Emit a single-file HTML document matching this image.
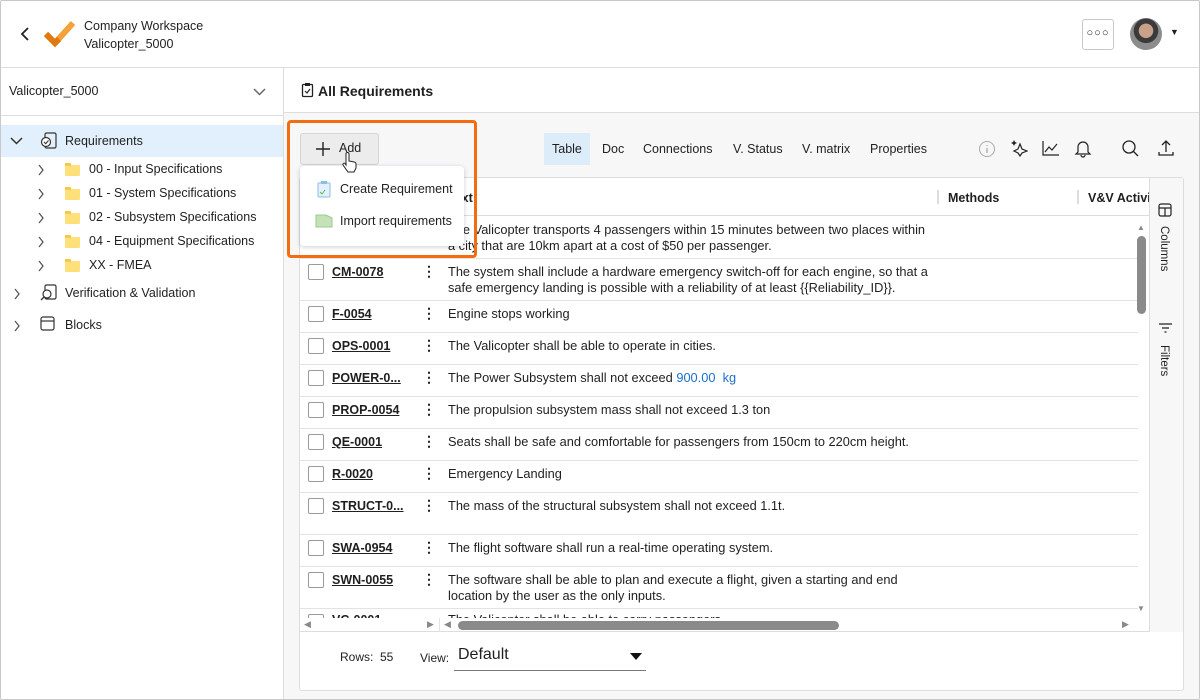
<!DOCTYPE html>
<html><head><meta charset="utf-8"><style>
*{box-sizing:border-box;margin:0;padding:0}
body{width:1200px;height:700px;overflow:hidden;font-family:"Liberation Sans",sans-serif;font-size:13px;color:#1f1f1f;background:#fff;position:relative}
.frame{position:absolute;inset:0;border:1px solid #c8c8c8;border-radius:2px}
.a{position:absolute}
.row{position:absolute;left:300px;width:838px;border-bottom:1px solid #e3e3e3;background:#fff}
.cb{position:absolute;left:8px;top:5px;width:16px;height:16px;border:1px solid #9a9a9a;border-radius:2px;background:#fff}
.id{position:absolute;left:32px;top:5px;font-weight:bold;text-decoration:underline;line-height:16px;font-size:12.5px}
.dots{position:absolute;left:122px;top:4px;font-weight:bold;font-size:14px;line-height:16px}
.tx{position:absolute;left:148px;top:5px;width:484px;line-height:16px;font-size:12.8px}
.vl{position:absolute;top:0;bottom:0;width:1px;background:#e3e3e3}
.tree{position:absolute;font-size:12.5px}
.folder{position:absolute;width:15px;height:11px;background:#fde07a;border-radius:1px}
.folder:before{content:"";position:absolute;left:0;top:-2px;width:6px;height:3px;background:#f7c948}
.tab{position:absolute;top:133px;height:32px;line-height:32px;font-size:12.5px;padding:0 8px}
</style></head><body>
<div class="frame"></div>
<svg class="a" style="left:20px;top:27px" width="10" height="14"><path d="M8 1 L2 7 L8 13" stroke="#222" stroke-width="1.8" fill="none"/></svg>
<svg class="a" style="left:44px;top:20px" width="32" height="28" viewBox="0 0 32 28"><path d="M2 14 L11 23 L29 3" stroke="#f5a13a" stroke-width="6" fill="none"/><path d="M2 14 L11 23 L15 19" stroke="#e07a10" stroke-width="6" fill="none"/></svg>
<div class="a" style="left:84px;top:17px;font-size:12.5px;line-height:18px;color:#222">Company Workspace<br>Valicopter_5000</div>
<div class="a" style="left:1082px;top:19px;width:32px;height:31px;border:1px solid #c8c8c8;border-radius:3px;text-align:center;line-height:26px;font-size:11px;letter-spacing:1px">&#9675;&#9675;&#9675;</div>
<div class="a" style="left:1130px;top:18px;width:32px;height:32px;border-radius:50%;background:radial-gradient(circle at 50% 40%,#c9a08a 0 28%,#3a3a3a 30% 48%,#8c8c8c 50%)"></div>
<div class="a" style="left:1170px;top:27px;font-size:9px">&#9660;</div>
<div class="a" style="left:1px;top:67px;width:1198px;height:1px;background:#ddd"></div>
<div class="a" style="left:283px;top:68px;width:1px;height:631px;background:#ddd"></div>
<div class="a" style="left:9px;top:84px;font-size:12.5px">Valicopter_5000</div>
<svg class="a" style="left:253px;top:88px" width="13" height="8"><path d="M1 1 L6.5 6.5 L12 1" stroke="#666" stroke-width="1.5" fill="none"/></svg>
<div class="a" style="left:1px;top:115px;width:282px;height:1px;background:#ddd"></div>
<div class="a" style="left:1px;top:125px;width:282px;height:32px;background:#e1f0fc"></div>
<svg class="a" style="left:10px;top:137px" width="13" height="8"><path d="M1 1 L6.5 6.5 L12 1" stroke="#333" stroke-width="1.5" fill="none"/></svg>
<svg class="a" style="left:40px;top:132px" width="18" height="18"><rect x="5" y="1" width="11" height="15" rx="1.5" stroke="#333" fill="none" stroke-width="1.2"/><circle cx="6" cy="10" r="4.5" fill="#fff" stroke="#333" stroke-width="1.2"/><path d="M4 10 L5.7 11.7 L8.5 8.5" stroke="#333" fill="none" stroke-width="1.1"/></svg>
<div class="tree" style="left:65px;top:134px">Requirements</div>
<svg class="a" style="left:37px;top:164px" width="8" height="12"><path d="M2 1 L6 6 L2 11" stroke="#555" stroke-width="1.3" fill="none"/></svg><div class="folder" style="left:65px;top:165px"></div><div class="tree" style="left:89px;top:162px">00 - Input Specifications</div>
<svg class="a" style="left:37px;top:188px" width="8" height="12"><path d="M2 1 L6 6 L2 11" stroke="#555" stroke-width="1.3" fill="none"/></svg><div class="folder" style="left:65px;top:189px"></div><div class="tree" style="left:89px;top:186px">01 - System Specifications</div>
<svg class="a" style="left:37px;top:212px" width="8" height="12"><path d="M2 1 L6 6 L2 11" stroke="#555" stroke-width="1.3" fill="none"/></svg><div class="folder" style="left:65px;top:213px"></div><div class="tree" style="left:89px;top:210px">02 - Subsystem Specifications</div>
<svg class="a" style="left:37px;top:236px" width="8" height="12"><path d="M2 1 L6 6 L2 11" stroke="#555" stroke-width="1.3" fill="none"/></svg><div class="folder" style="left:65px;top:237px"></div><div class="tree" style="left:89px;top:234px">04 - Equipment Specifications</div>
<svg class="a" style="left:37px;top:260px" width="8" height="12"><path d="M2 1 L6 6 L2 11" stroke="#555" stroke-width="1.3" fill="none"/></svg><div class="folder" style="left:65px;top:261px"></div><div class="tree" style="left:89px;top:258px">XX - FMEA</div>
<svg class="a" style="left:13px;top:288px" width="8" height="12"><path d="M2 1 L6 6 L2 11" stroke="#555" stroke-width="1.3" fill="none"/></svg>
<svg class="a" style="left:40px;top:284px" width="18" height="18"><rect x="5" y="1" width="11" height="14" rx="1.5" stroke="#333" fill="none" stroke-width="1.2"/><circle cx="7" cy="10" r="4" fill="#fff" stroke="#333" stroke-width="1.2"/><path d="M4 13 L1 16" stroke="#333" stroke-width="1.3"/></svg>
<div class="tree" style="left:65px;top:286px">Verification &amp; Validation</div>
<svg class="a" style="left:13px;top:320px" width="8" height="12"><path d="M2 1 L6 6 L2 11" stroke="#555" stroke-width="1.3" fill="none"/></svg>
<svg class="a" style="left:40px;top:316px" width="16" height="16"><rect x="1" y="1" width="13" height="13" rx="2" stroke="#333" fill="none" stroke-width="1.2"/><path d="M1 5 H14" stroke="#333" stroke-width="1.2"/></svg>
<div class="tree" style="left:65px;top:318px">Blocks</div>
<div class="a" style="left:284px;top:113px;width:915px;height:586px;background:#f7f7f8"></div>
<div class="a" style="left:284px;top:112px;width:915px;height:1px;background:#ddd"></div>
<svg class="a" style="left:301px;top:82px" width="13" height="16"><rect x="1.5" y="2.5" width="10" height="12" rx="1" stroke="#222" fill="none" stroke-width="1.3"/><rect x="4" y="1" width="5" height="3" fill="#222"/><path d="M4 9 L6 11 L9 7" stroke="#222" fill="none" stroke-width="1.2"/></svg>
<div class="a" style="left:318px;top:83px;font-size:14px;font-weight:bold">All Requirements</div>
<div class="a" style="left:300px;top:133px;width:79px;height:32px;background:#ececec;border:1px solid #d5d5d5;border-radius:3px"></div>
<svg class="a" style="left:315px;top:141px" width="16" height="16"><path d="M8 1 V15 M1 8 H15" stroke="#222" stroke-width="1.4"/></svg>
<div class="a" style="left:339px;top:141px;font-size:12.5px">Add</div>
<div class="tab" style="left:544px;background:#dcecf9">Table</div>
<div class="tab" style="left:594px">Doc</div>
<div class="tab" style="left:635px">Connections</div>
<div class="tab" style="left:725px">V. Status</div>
<div class="tab" style="left:794px">V. matrix</div>
<div class="tab" style="left:862px">Properties</div>
<svg class="a" style="left:978px;top:140px" width="18" height="18"><circle cx="9" cy="9" r="7.5" stroke="#aaa" fill="none"/><path d="M9 8 V13 M9 5 V6" stroke="#aaa" stroke-width="1.3"/></svg>
<svg class="a" style="left:1010px;top:139px" width="18" height="18"><path d="M10 5 L12 10 L17 12 L12 14 L10 17 L8 14 L4 12 L8 10 Z" stroke="#222" fill="none" stroke-width="1.2"/><path d="M4 1 L5 3 L7 4 L5 5 L4 7 L3 5 L1 4 L3 3Z" fill="#222"/></svg>
<svg class="a" style="left:1042px;top:140px" width="18" height="17"><path d="M1 1 V15 H17 M3 12 L7 7 L10 10 L15 4" stroke="#222" fill="none" stroke-width="1.2"/></svg>
<svg class="a" style="left:1074px;top:139px" width="18" height="19"><path d="M4 13 V8 a5 5 0 0 1 10 0 V13 L16 15 H2 Z M7 16 a2 2 0 0 0 4 0" stroke="#222" fill="none" stroke-width="1.2"/></svg>
<svg class="a" style="left:1121px;top:139px" width="19" height="19"><circle cx="8" cy="8" r="6" stroke="#222" fill="none" stroke-width="1.3"/><path d="M12.5 12.5 L17 17" stroke="#222" stroke-width="1.3"/></svg>
<svg class="a" style="left:1157px;top:139px" width="18" height="19"><path d="M9 2 V13 M5 6 L9 2 L13 6 M2 13 V16 H16 V13" stroke="#222" fill="none" stroke-width="1.3"/></svg>
<div class="a" style="left:299px;top:177px;width:885px;height:514px;background:#fff;border:1px solid #ddd;border-radius:3px"></div>
<div class="a" style="left:1149px;top:178px;width:34px;height:454px;background:#f7f7f8;border-left:1px solid #ddd"></div>
<svg class="a" style="left:1158px;top:203px" width="14" height="14"><rect x="1" y="1" width="12" height="12" rx="2" stroke="#222" fill="none" stroke-width="1.2"/><path d="M1 5 H13 M7 5 V13" stroke="#222" stroke-width="1.2"/></svg>
<div class="a" style="left:1158px;top:226px;writing-mode:vertical-rl;font-size:11.5px">Columns</div>
<svg class="a" style="left:1159px;top:323px" width="13" height="10"><path d="M0 1 H13 M3 5 H10 M5.5 9 H7.5" stroke="#222" stroke-width="1.2"/></svg>
<div class="a" style="left:1158px;top:345px;writing-mode:vertical-rl;font-size:11.5px">Filters</div>
<div class="a" style="left:300px;top:178px;width:849px;height:38px;border-bottom:1px solid #ddd"></div>
<div class="a" style="left:448px;top:191px;font-weight:bold;font-size:12.5px">Text</div>
<div class="a" style="left:937px;top:190px;width:2px;height:14px;background:#ddd"></div>
<div class="a" style="left:948px;top:191px;font-weight:bold;font-size:12.5px">Methods</div>
<div class="a" style="left:1077px;top:190px;width:2px;height:14px;background:#ddd"></div>
<div class="a" style="left:1088px;top:191px;font-weight:bold;font-size:12.5px;width:61px;overflow:hidden;white-space:nowrap">V&amp;V Activities</div>
<div class="a" style="left:300px;top:217px;width:838px;height:401px;overflow:hidden">
<div class="vl" style="left:139px"></div><div class="vl" style="left:639px"></div><div class="vl" style="left:779px"></div>
</div>
<div class="row" style="top:217px;height:42px"><div class="cb"></div><div class="id">VC-0001</div><div class="dots">&#8942;</div><div class="tx">The Valicopter transports 4 passengers within 15 minutes between two places within a city that are 10km apart at a cost of $50 per passenger.</div></div>
<div class="row" style="top:259px;height:42px"><div class="cb"></div><div class="id">CM-0078</div><div class="dots">&#8942;</div><div class="tx">The system shall include a hardware emergency switch-off for each engine, so that a safe emergency landing is possible with a reliability of at least {{Reliability_ID}}.</div></div>
<div class="row" style="top:301px;height:32px"><div class="cb"></div><div class="id">F-0054</div><div class="dots">&#8942;</div><div class="tx">Engine stops working</div></div>
<div class="row" style="top:333px;height:32px"><div class="cb"></div><div class="id">OPS-0001</div><div class="dots">&#8942;</div><div class="tx">The Valicopter shall be able to operate in cities.</div></div>
<div class="row" style="top:365px;height:32px"><div class="cb"></div><div class="id">POWER-0...</div><div class="dots">&#8942;</div><div class="tx">The Power Subsystem shall not exceed <span style="color:#1a6fd1">900.00&nbsp; kg</span></div></div>
<div class="row" style="top:397px;height:32px"><div class="cb"></div><div class="id">PROP-0054</div><div class="dots">&#8942;</div><div class="tx">The propulsion subsystem mass shall not exceed 1.3 ton</div></div>
<div class="row" style="top:429px;height:32px"><div class="cb"></div><div class="id">QE-0001</div><div class="dots">&#8942;</div><div class="tx">Seats shall be safe and comfortable for passengers from 150cm to 220cm height.</div></div>
<div class="row" style="top:461px;height:32px"><div class="cb"></div><div class="id">R-0020</div><div class="dots">&#8942;</div><div class="tx">Emergency Landing</div></div>
<div class="row" style="top:493px;height:42px"><div class="cb"></div><div class="id">STRUCT-0...</div><div class="dots">&#8942;</div><div class="tx">The mass of the structural subsystem shall not exceed 1.1t.</div></div>
<div class="row" style="top:535px;height:32px"><div class="cb"></div><div class="id">SWA-0954</div><div class="dots">&#8942;</div><div class="tx">The flight software shall run a real-time operating system.</div></div>
<div class="row" style="top:567px;height:42px"><div class="cb"></div><div class="id">SWN-0055</div><div class="dots">&#8942;</div><div class="tx">The software shall be able to plan and execute a flight, given a starting and end<br>location by the user as the only inputs.</div></div>
<div class="a" style="left:300px;top:609px;width:838px;height:9px;overflow:hidden;background:#fff"><div class="cb" style="top:5px"></div><div class="id" style="top:3px">VC-0001</div><div class="tx" style="top:3px">The Valicopter shall be able to carry passengers</div></div>
<div class="a" style="left:1137px;top:223px;font-size:8px;color:#888">&#9650;</div>
<div class="a" style="left:1137px;top:236px;width:9px;height:78px;background:#8a8a8a;border-radius:5px"></div>
<div class="a" style="left:1137px;top:604px;font-size:8px;color:#888">&#9660;</div>
<div class="a" style="left:300px;top:618px;width:849px;height:14px;background:#fff;border-bottom:1px solid #ddd"></div>
<div class="a" style="left:439px;top:618px;width:1px;height:14px;background:#e3e3e3"></div>
<div class="a" style="left:304px;top:619px;font-size:9px;color:#888">&#9664;</div>
<div class="a" style="left:427px;top:619px;font-size:9px;color:#888">&#9654;</div>
<div class="a" style="left:444px;top:619px;font-size:9px;color:#888">&#9664;</div>
<div class="a" style="left:458px;top:621px;width:381px;height:9px;background:#8a8a8a;border-radius:5px"></div>
<div class="a" style="left:1122px;top:619px;font-size:9px;color:#888">&#9654;</div>
<div class="a" style="left:340px;top:650px;font-size:12px">Rows:&nbsp; 55</div>
<div class="a" style="left:420px;top:651px;font-size:12px">View:</div>
<div class="a" style="left:458px;top:646px;font-size:16px">Default</div>
<svg class="a" style="left:630px;top:653px" width="12" height="7"><path d="M0 0 H12 L6 7Z" fill="#111"/></svg>
<div class="a" style="left:454px;top:670px;width:192px;height:1px;background:#777"></div>
<div class="a" style="left:300px;top:166px;width:164px;height:80px;background:#fff;border-radius:4px;box-shadow:0 1px 5px rgba(0,0,0,.2)"></div>
<svg class="a" style="left:316px;top:180px" width="16" height="18"><rect x="2" y="3" width="12" height="14" rx="1" fill="#e3f1fc" stroke="#8bbde6"/><rect x="5" y="1" width="6" height="3" fill="#8bbde6"/><path d="M4 12 L6 14 L9 10" stroke="#5cb85c" fill="none"/></svg>
<div class="a" style="left:340px;top:182px;font-size:12.5px">Create Requirement</div>
<svg class="a" style="left:315px;top:214px" width="18" height="14"><path d="M1 1 H11 L17 4 V13 H1Z" fill="#c3e2b8" stroke="#9cc98e"/></svg>
<div class="a" style="left:340px;top:214px;font-size:12.5px">Import requirements</div>
<svg class="a" style="left:341px;top:152px" width="16" height="22"><path d="M5 2 a1.5 1.5 0 0 1 3 0 V9 l5 1 a2 2 0 0 1 2 2 V16 l-2 4 H7 L2 13 a1.3 1.3 0 0 1 2-1.5 L5 13 Z" fill="#fff" stroke="#222" stroke-width="1"/></svg>
<div class="a" style="left:287px;top:120px;width:190px;height:138px;border:3px solid #f26d0f;border-radius:4px"></div>
</body></html>
